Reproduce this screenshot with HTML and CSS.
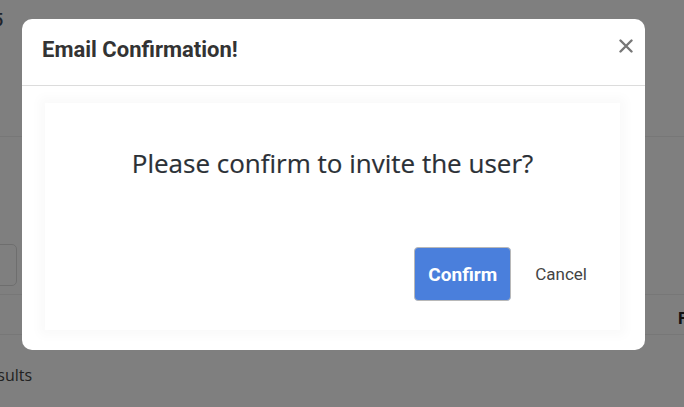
FILE: index.html
```html
<!DOCTYPE html>
<html lang="en">
<head>
  <meta charset="UTF-8">
  <meta name="viewport" content="width=device-width, initial-scale=1.0">
  <title>Email Confirmation</title>
  <link rel="stylesheet" href="styles.css">
</head>
<body>
  <!-- page behind the modal -->
  <div class="page">
    <div class="page-head">
      <div class="page-title">Members 5</div>
    </div>
    <div class="toolbar">
      <div class="search-box"></div>
    </div>
    <div class="table-head">
      <span class="th">Flags</span>
    </div>
    <div class="table-foot">No results</div>
  </div>

  <div class="backdrop">
    <div class="modal">
      <div class="modal-header">
        <h2 class="modal-title">Email Confirmation!</h2>
        <button class="close-button" aria-label="Close">
          <svg width="14" height="14" viewBox="0 0 14 14">
            <path d="M1.5 1.5 L12.5 12.5 M12.5 1.5 L1.5 12.5" stroke="#777" stroke-width="2.4" stroke-linecap="round"/>
          </svg>
        </button>
      </div>
      <div class="modal-body">
        <div class="confirm-card">
          <p class="confirm-text">Please confirm to invite the user?</p>
          <div class="actions">
            <button class="btn-confirm">Confirm</button>
            <button class="btn-cancel">Cancel</button>
          </div>
        </div>
      </div>
    </div>
  </div>
</body>
</html>
```

FILE: styles.css
```css
body {
  margin: 0;
  font-family: Roboto, "Liberation Sans", sans-serif;
  color: #333;
  background-color: white;
  overflow: hidden;
}
.page {
  width: 684px;
  height: 407px;
  overflow: hidden;
}
.page-head {
  height: 136px;
  border-bottom: 1px solid #eee;
}
.page-title {
  margin-left: -88px;
  padding-top: 9px;
  font-size: 18px;
  font-weight: 500;
  color: #3c4858;
  white-space: nowrap;
}
.toolbar {
  height: 50px;
  padding-top: 107px;
  border-bottom: 1px solid #eee;
}
.search-box {
  width: 60px;
  height: 40px;
  margin-left: -45px;
  border: 1px solid #ddd;
  border-radius: 5px;
}
.table-head {
  height: 39px;
  border-bottom: 1px solid #eee;
  padding-left: 678px;
  white-space: nowrap;
  line-height: 46px;
}
.th {
  font-weight: 700;
  font-size: 17px;
  color: #222;
}
.table-foot {
  margin-left: -44px;
  margin-top: 29px;
  font-family: "Open Sans", sans-serif;
  font-size: 16px;
  color: #444;
  white-space: nowrap;
}
.backdrop {
  position: fixed;
  top: 0;
  left: 0;
  right: 0;
  bottom: 0;
  background-color: rgba(0, 0, 0, 0.5);
  display: flex;
  align-items: flex-start;
  padding: 19px 0 0 22px;
}
.modal {
  width: 623px;
  background-color: white;
  border-radius: 10px;
}
.modal-header {
  height: 66px;
  display: flex;
  justify-content: space-between;
  border-bottom: 1px solid #dcdcdc;
  padding: 0 12px 0 20px;
}
.modal-title {
  margin: 0;
  padding-top: 18px;
  font-size: 22px;
  font-weight: 700;
  color: #333;
}
.close-button {
  background: none;
  border: none;
  padding: 0;
  margin-top: 20px;
  width: 14px;
  height: 14px;
  cursor: pointer;
}
.close-button svg {
  display: block;
}
.modal-body {
  padding: 17px 25px 20px 23px;
}
.confirm-card {
  background-color: white;
  box-shadow: 0 0 10px 6px rgba(0, 0, 0, 0.025);
  padding: 40px 33px 29px;
}
.confirm-text {
  margin: 0 0 64px;
  text-align: center;
  font-family: "Open Sans", sans-serif;
  font-size: 26px;
  line-height: 40px;
  color: #2b3036;
  -webkit-text-stroke: 0.2px #2b3036;
}
.actions {
  display: flex;
  justify-content: flex-end;
  align-items: center;
  gap: 24px;
}
.btn-confirm {
  height: 54px;
  width: 97px;
  background-color: #4a7fdc;
  color: white;
  border: 1px solid #b8b8b8;
  border-radius: 4px;
  font-family: Roboto, sans-serif;
  font-weight: 700;
  font-size: 19px;
  cursor: pointer;
}
.btn-cancel {
  background: none;
  border: none;
  padding: 0;
  font-family: Roboto, sans-serif;
  font-size: 17px;
  color: #444;
  cursor: pointer;
}
```
